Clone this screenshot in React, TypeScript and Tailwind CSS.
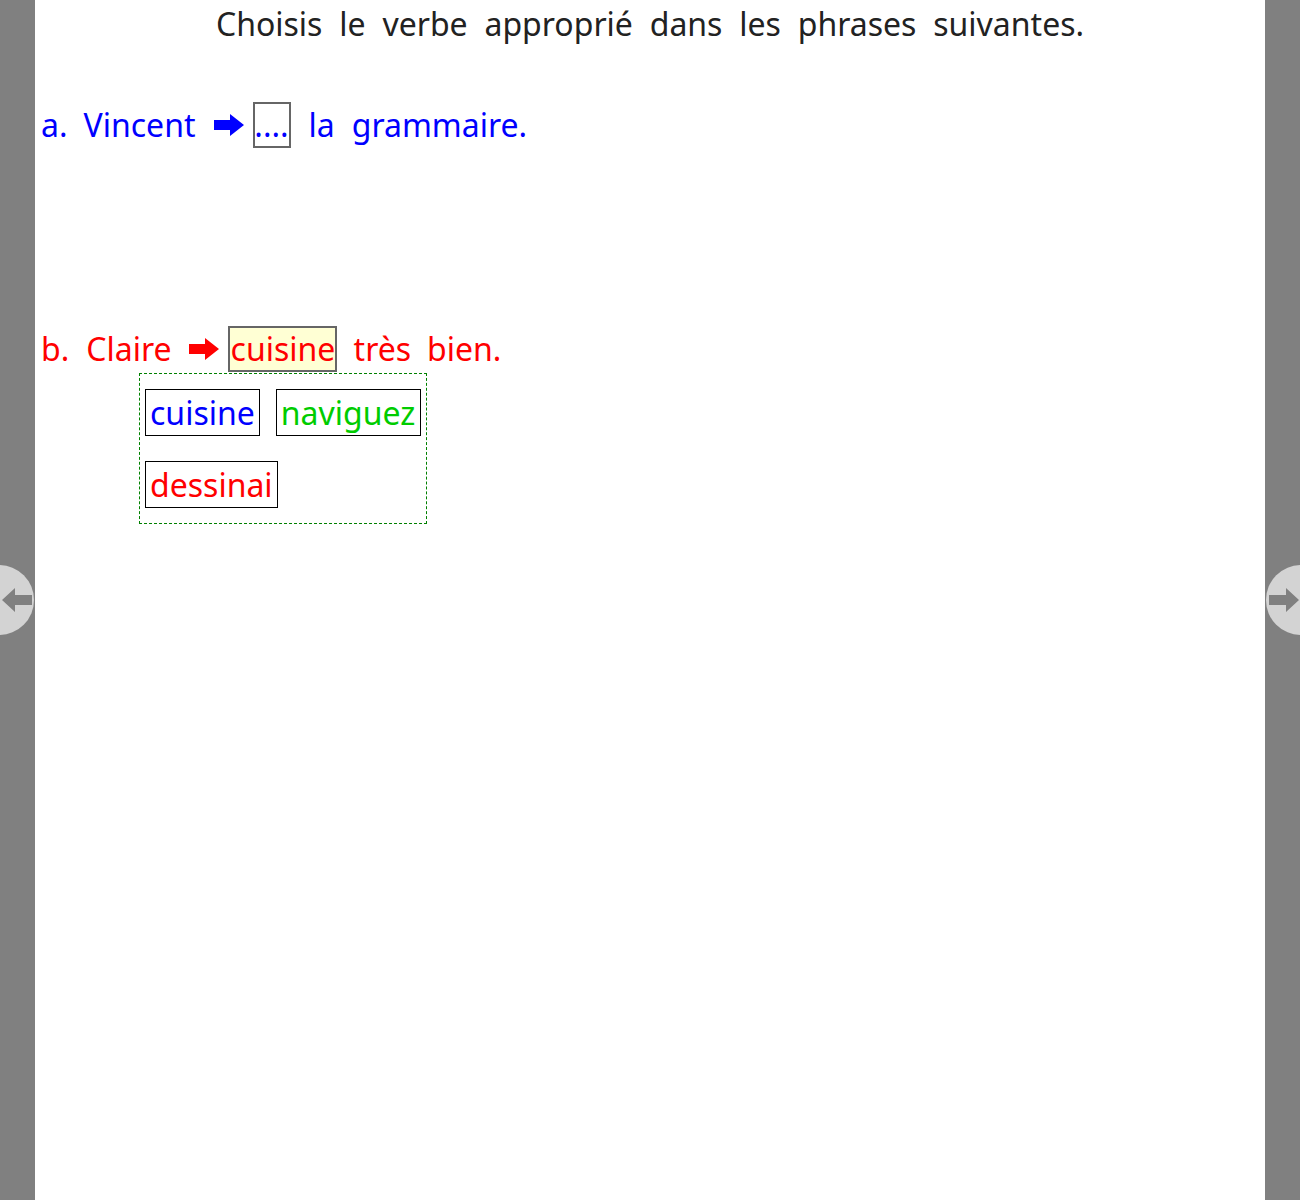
import React from "react";

const Arrow = ({ color }: { color: string }) => (
  <svg width="30" height="22" viewBox="0 0 30 22" className="block">
    <path d="M0 6 H16 V0 L30 11 L16 22 V16 H0 Z" fill={color} />
  </svg>
);

const NavArrow = ({ dir }: { dir: "left" | "right" }) => (
  <svg width="30" height="24" viewBox="0 0 30 24" className="block">
    {dir === "right" ? (
      <path d="M0 7 H17 V0 L30 12 L17 24 V17 H0 Z" fill="#808080" />
    ) : (
      <path d="M30 7 H13 V0 L0 12 L13 24 V17 H30 Z" fill="#808080" />
    )}
  </svg>
);

export default function App() {
  return (
    <div
      className="relative flex min-h-[1200px] bg-[#808080] overflow-hidden"
      style={{ fontFamily: '"Noto Sans", "Open Sans", sans-serif' }}
    >
      <div className="w-[35px] shrink-0" />
      <div className="w-[1230px] shrink-0 bg-white min-h-[1200px]">
        <div className="text-center text-[32px] leading-[48px] text-[#222] [word-spacing:8.5px]">
          Choisis le verbe approprié dans les phrases suivantes.
        </div>

        {/* line a */}
        <div className="mt-[54px] flex h-[46px] items-center pl-[6px] text-[32px] leading-[46px] text-[#0000ff]">
          <span>a.</span>
          <span className="ml-[16px]">Vincent</span>
          <span className="ml-[18px]">
            <Arrow color="#0000ff" />
          </span>
          <span className="ml-[9px] box-border flex h-[46px] w-[38px] items-center justify-center border-2 border-[#666] leading-[40px]">
            ....
          </span>
          <span className="ml-[18px]">la</span>
          <span className="ml-[17px]">grammaire.</span>
        </div>

        {/* line b */}
        <div className="relative mt-[178px] flex h-[46px] items-center pl-[6px] text-[32px] leading-[46px] text-[#ff0000]">
          <span>b.</span>
          <span className="ml-[17px]">Claire</span>
          <span className="ml-[17px]">
            <Arrow color="#ff0000" />
          </span>
          <span className="ml-[9px] box-border flex h-[46px] w-[109px] items-center border-2 border-[#666] bg-[#ffffd4] pl-[1px] leading-[40px]">
            cuisine
          </span>
          <span className="ml-[17px]">très</span>
          <span className="ml-[16px]">bien.</span>

          <div className="absolute left-[104px] top-[47px] box-border h-[151px] w-[288px] border border-dashed border-[#008000] bg-white pl-[5px] pt-[15px]">
            <div className="flex gap-[16px]">
              <span className="box-border flex h-[47px] items-center border border-black px-[4px] leading-[44px] text-[#0000ff]">
                cuisine
              </span>
              <span className="box-border flex h-[47px] items-center border border-black pl-[4px] pr-[5px] leading-[44px] text-[#00cc00]">
                naviguez
              </span>
            </div>
            <div className="mt-[25px] flex">
              <span className="box-border flex h-[47px] items-center border border-black px-[4px] leading-[44px] text-[#ff0000]">
                dessinai
              </span>
            </div>
          </div>
        </div>
      </div>
      <div className="w-[35px] shrink-0" />

      {/* nav circles */}
      <div className="absolute left-[-36px] top-[565px] flex h-[70px] w-[70px] items-center justify-end rounded-full bg-[#d3d3d3] pr-[2px]">
        <NavArrow dir="left" />
      </div>
      <div className="absolute right-[-36px] top-[565px] flex h-[70px] w-[70px] items-center justify-start rounded-full bg-[#d3d3d3] pl-[3px]">
        <NavArrow dir="right" />
      </div>
    </div>
  );
}
